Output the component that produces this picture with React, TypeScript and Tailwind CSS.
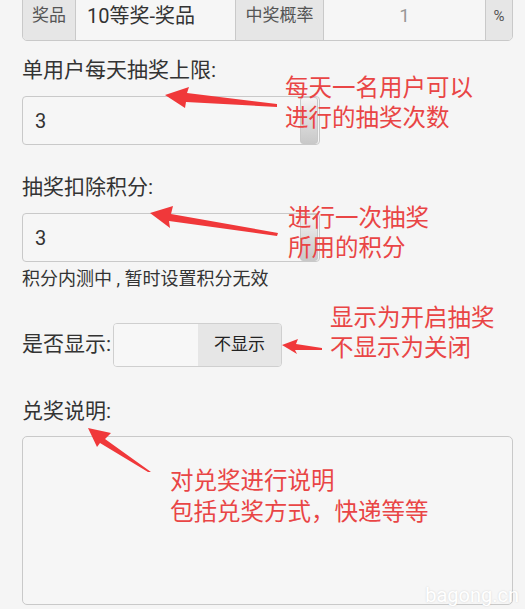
import React from 'react';

const RED = 'text-[#e94545]';

const Spinner: React.FC = () => (
    <div className="h-[47px] w-[18px] rounded-[3px] border border-[#c8c8c8] bg-gradient-to-b from-[#f4f4f4] via-[#dcdcdc] to-[#c9c9c9]" />
);

const NumberBox: React.FC<{ value: string }> = ({ value }) => (
    <div className="flex h-[49px] w-[298px] items-center justify-between rounded-[4px] border border-[#c9c9c9] bg-[#f6f6f6] pl-[12px] pr-[1px]">
        <span className="text-[20px] text-[#333]">{value}</span>
        <Spinner />
    </div>
);

const Arrows: React.FC = () => (
    <svg className="pointer-events-none absolute left-0 top-0" width="525" height="609" viewBox="0 0 525 609">
        <g fill="#f0383a">
            <polygon points="165,95 189,87 187,93 277,104 277,107 186,102 185,108" />
            <polygon points="150,213 173,206 171,214 278,233 277,236 169,221 170,228" />
            <polygon points="282,345 298,339 296,344 322,348 322,350 295,350 297,354" />
            <polygon points="88,428 111,433 105,439 151,472 148,472 100,443 97,447" />
        </g>
    </svg>
);

const App: React.FC = () => {
    return (
        <div
            className="relative h-[609px] w-[525px] overflow-hidden bg-[#f5f5f5] text-[#333]"
            style={{ fontFamily: 'Roboto, "Noto Sans CJK SC", sans-serif' }}
        >
            <div className="flex flex-col pl-[22px] pr-[12px]">
                {/* prize row */}
                <div className="mt-[-9px] flex h-[50px] overflow-hidden rounded-b-[5px] border border-[#c9c9c9] text-[17px]">
                    <div className="flex w-[52px] items-center justify-center bg-[#e6e6e6] text-[#555]">奖品</div>
                    <div className="flex w-[160px] items-center border-l border-[#c9c9c9] bg-[#f6f6f6] pl-[11px] text-[20px] text-[#333]">10等奖-奖品</div>
                    <div className="flex w-[88px] items-center justify-center border-l border-[#c9c9c9] bg-[#e6e6e6] text-[#555]">中奖概率</div>
                    <div className="flex w-[162px] items-center justify-center border-l border-[#c9c9c9] bg-[#f6f6f6] text-[19px] text-[#999]">1</div>
                    <div className="flex flex-1 items-center justify-center border-l border-[#c9c9c9] bg-[#e6e6e6] text-[15px] text-[#555]">%</div>
                </div>

                <div className="mt-[15px] text-[21px] leading-[28px] text-[#333]">单用户每天抽奖上限:</div>
                <div className="mt-[12px]">
                    <NumberBox value="3" />
                </div>

                <div className="mt-[28px] text-[21px] leading-[28px] text-[#333]">抽奖扣除积分:</div>
                <div className="mt-[12px]">
                    <NumberBox value="3" />
                </div>
                <div className="mt-[6px] text-[18px] leading-[22px] text-[#333]">积分内测中 , 暂时设置积分无效</div>

                <div className="mt-[33px] flex h-[44px] items-center">
                    <span className="text-[21px] text-[#333]">是否显示:</span>
                    <div className="ml-[2px] flex h-[44px] w-[169px] overflow-hidden rounded-[4px] border border-[#cfcfcf]">
                        <div className="w-[84px] bg-[#f7f7f7]" />
                        <div className="flex flex-1 items-center justify-center bg-[#e6e6e6] text-[17px] text-[#222]">不显示</div>
                    </div>
                </div>

                <div className="mt-[30px] text-[21px] leading-[28px] text-[#333]">兑奖说明:</div>
                <div className="mt-[11px] h-[169px] rounded-[5px] border border-[#c9c9c9] bg-[#f6f6f6]" />
            </div>

            {/* annotations */}
            <div className={`absolute left-[285px] top-[73px] text-[23.5px] leading-[30px] ${RED}`}>
                <div>每天一名用户可以</div>
                <div>进行的抽奖次数</div>
            </div>
            <div className={`absolute left-[288px] top-[203px] text-[23.5px] leading-[30px] ${RED}`}>
                <div>进行一次抽奖</div>
                <div>所用的积分</div>
            </div>
            <div className={`absolute left-[330px] top-[303px] text-[23.5px] leading-[30px] ${RED}`}>
                <div>显示为开启抽奖</div>
                <div>不显示为关闭</div>
            </div>
            <div className={`absolute left-[170px] top-[466px] text-[23.5px] leading-[31px] ${RED}`}>
                <div>对兑奖进行说明</div>
                <div>包括兑奖方式，快递等等</div>
            </div>
            <Arrows />

            <div className="absolute right-[6px] top-[585px] text-[20px] leading-[20px] text-white [text-shadow:0_0_2px_rgba(0,0,0,0.15)]">bagong.cn</div>
        </div>
    );
};

export default App;
